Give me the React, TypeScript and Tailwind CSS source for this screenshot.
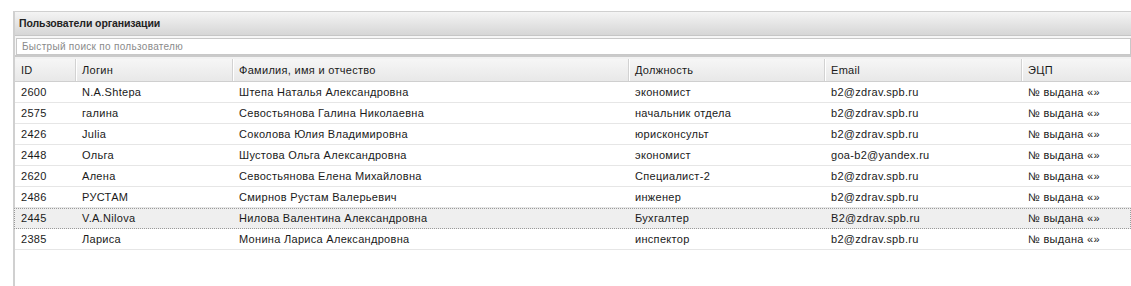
import React from "react";

const cols = ["w-[61px]", "w-[157px]", "w-[396px]", "w-[196px]", "w-[197px]", "flex-1"];

const headers = ["ID", "Логин", "Фамилия, имя и отчество", "Должность", "Email", "ЭЦП"];

const rows: string[][] = [
  ["2600", "N.A.Shtepa", "Штепа Наталья Александровна", "экономист", "b2@zdrav.spb.ru", "№ выдана «»"],
  ["2575", "галина", "Севостьянова Галина Николаевна", "начальник отдела", "b2@zdrav.spb.ru", "№ выдана «»"],
  ["2426", "Julia", "Соколова Юлия Владимировна", "юрисконсульт", "b2@zdrav.spb.ru", "№ выдана «»"],
  ["2448", "Ольга", "Шустова Ольга Александровна", "экономист", "goa-b2@yandex.ru", "№ выдана «»"],
  ["2620", "Алена", "Севостьянова Елена Михайловна", "Специалист-2", "b2@zdrav.spb.ru", "№ выдана «»"],
  ["2486", "РУСТАМ", "Смирнов Рустам Валерьевич", "инженер", "b2@zdrav.spb.ru", "№ выдана «»"],
  ["2445", "V.A.Nilova", "Нилова Валентина Александровна", "Бухгалтер", "B2@zdrav.spb.ru", "№ выдана «»"],
  ["2385", "Лариса", "Монина Лариса Александровна", "инспектор", "b2@zdrav.spb.ru", "№ выдана «»"],
];

export default function App() {
  return (
    <div className="w-[1131px] h-[286px] bg-white overflow-hidden font-['Liberation_Sans',Arial,sans-serif] text-[11px] text-[#1a1a1a]">
      <div className="pt-[11px] pl-[13px]">
        <div className="h-[275px] border-l-2 border-t border-[#d0d0d0] flex flex-col">
          <div className="h-[24px] bg-gradient-to-b from-[#f4f4f4] to-[#d6d6d6] border-b border-[#c6c6c6] flex items-center pl-[4px] font-bold text-[10.5px] tracking-[-0.1px] text-[#222]">
            Пользователи организации
          </div>
          <div className="h-[21px] bg-[#f6f6f6] border-b-2 border-[#cacaca] pl-[1px] pt-[2px]">
            <div className="h-[17px] bg-white border border-[#c8c8c8] flex items-center pl-[5px] text-[10px] text-[#8a8a8a] tracking-[0.3px]">
              Быстрый поиск по пользователю
            </div>
          </div>
          <div className="h-[2px] bg-[#f2f2f2]" />
          <div className="h-[23px] flex bg-gradient-to-b from-[#f6f6f6] to-[#e8e8e8] border-b border-[#cfcfcf]">
            {headers.map((h, i) => (
              <div
                key={h}
                className={`${cols[i]} flex items-center pl-[6px] pt-px tracking-[0.3px] ${i < 5 ? "border-r border-[#d2d2d2] shadow-[1px_0_0_#ffffff]" : ""}`}
              >
                {h}
              </div>
            ))}
          </div>
          {rows.map((r) => {
            const sel = r[0] === "2445";
            return (
              <div
                key={r[0]}
                className={`h-[21px] flex ${sel ? "bg-[#efefef] border border-dotted border-[#9a9a9a] -ml-px" : "border-b border-[#e6e6e6]"}`}
              >
                {r.map((c, i) => (
                  <div key={i} className={`${cols[i]} flex items-center pl-[6px] tracking-[0.3px] whitespace-nowrap`}>
                    {c}
                  </div>
                ))}
              </div>
            );
          })}
        </div>
      </div>
    </div>
  );
}
